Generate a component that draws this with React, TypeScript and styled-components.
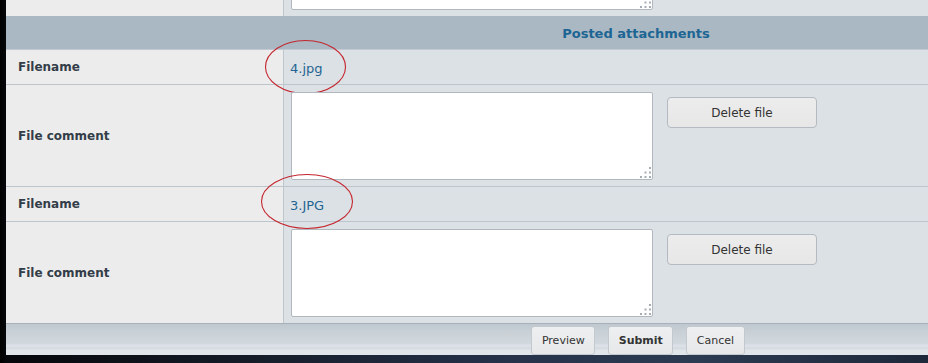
import * as React from "react";
import styled, { createGlobalStyle } from "styled-components";

const GlobalStyle = createGlobalStyle`
  * {
    box-sizing: border-box;
  }

  html,
  body {
    margin: 0;
    padding: 0;
    height: 363px;
    overflow: hidden;
  }

  body {
    background: linear-gradient(90deg, #000000 0, #05070a 6px, #141b26 25%, #25324a 55%, #2c3b52 75%, #1d283a 100%);
    font-family: "DejaVu Sans", Verdana, sans-serif;
  }
`;

// the form is wider than the window; its centre sits at x = 636
const CENTER_SHIFT = 338;

const Page = styled.div`
  margin-left: 6px;
  width: 922px;
`;

const Table = styled.table`
  margin-top: -85px;
  width: 100%;
  table-layout: fixed;
  border-collapse: separate;
  border-spacing: 0;
`;

const HeaderCell = styled.th`
  height: 34px;
  padding: 1px 0 0 ${CENTER_SHIFT}px;
  background-color: #a9b8c2;
  border-bottom: 1px solid #c3c9d4;
  color: #1d6594;
  font-size: 13px;
  font-weight: 700;
  text-align: center;
  vertical-align: middle;
`;

const Label = styled.th<{ $last?: boolean }>`
  width: 278px;
  padding: 0 0 0 12px;
  background-color: #ececec;
  border-right: 1px solid #bec6ce;
  border-bottom: ${({ $last }) => ($last ? "none" : "1px solid #bcc4cc")};
  color: #333d48;
  font-size: 12px;
  font-weight: 700;
  text-align: left;
  vertical-align: middle;
`;

const Value = styled.td<{ $last?: boolean }>`
  padding: 0 0 0 6px;
  background-color: #dce1e5;
  border-bottom: ${({ $last }) => ($last ? "none" : "1px solid #bcc4cc")};
  vertical-align: middle;
`;

const FilenameRow = styled.tr`
  height: 35px;
`;

const CommentCell = styled(Value)`
  padding: 7px 0 6px 7px;
  vertical-align: top;
`;

const CommentBox = styled.div`
  display: flex;
  align-items: flex-start;
  gap: 14px;
`;

const Grow = styled.span`
  position: relative;
  display: inline-block;
  line-height: 0;
`;

const Textarea = styled.textarea`
  display: block;
  width: 362px;
  height: 88px;
  margin: 0;
  padding: 3px;
  background: #ffffff;
  border: 1px solid #b0b7be;
  border-radius: 2px;
  resize: none;
  outline: none;
  font-family: "DejaVu Sans", Verdana, sans-serif;
  font-size: 12px;
`;

const Grip = styled.svg`
  position: absolute;
  right: 2px;
  bottom: 2px;
  width: 11px;
  height: 11px;
`;

const DeleteButton = styled.button`
  margin-top: 5px;
  width: 150px;
  height: 31px;
  padding: 0;
  background: linear-gradient(#ececec, #e7e7e7);
  border: 1px solid #b3bac1;
  border-radius: 4px;
  color: #333333;
  font-family: "DejaVu Sans", Verdana, sans-serif;
  font-size: 12px;
  cursor: pointer;
`;

const FileLink = styled.a`
  position: relative;
  color: #1f6593;
  font-size: 13px;
  text-decoration: none;
`;

const Ring = styled.svg`
  position: absolute;
  overflow: visible;
  pointer-events: none;
`;

const Bar = styled.div`
  display: flex;
  justify-content: center;
  gap: 13px;
  height: 32px;
  padding: 2px 0 0 ${CENTER_SHIFT + 4}px;
  border-top: 1px solid #a8b1b9;
  background: linear-gradient(
    #bfc8cf 0,
    #c9d1d7 8px,
    #d1d8de 20px,
    #dde3e8 21px,
    #d3dae0 25px,
    #e1e6ea 26px,
    #e1e6ea 100%
  );
`;

const BarButton = styled.button<{ $primary?: boolean }>`
  height: 29px;
  padding: 0 9.5px;
  background: linear-gradient(#eeeff0, #e6e8ea);
  border: 1px solid #c3c9ce;
  border-radius: 3px;
  color: #333333;
  font-family: "DejaVu Sans", Verdana, sans-serif;
  font-size: 11px;
  font-weight: ${({ $primary }) => ($primary ? 700 : 400)};
  cursor: pointer;
`;

const GripDots = () => (
  <Grip viewBox="0 0 11 11">
    <g fill="#a7adb4">
      <rect x="9" y="0" width="2" height="2" />
      <rect x="4.5" y="4.5" width="2" height="2" />
      <rect x="9" y="4.5" width="2" height="2" />
      <rect x="0" y="9" width="2" height="2" />
      <rect x="4.5" y="9" width="2" height="2" />
      <rect x="9" y="9" width="2" height="2" />
    </g>
  </Grip>
);

interface IRingProps {
  left: number;
  top: number;
  width: number;
  height: number;
}

const RedRing = ({ left, top, width, height }: IRingProps) => (
  <Ring style={{ left, top, width, height }} viewBox={`0 0 ${width} ${height}`}>
    <ellipse
      cx={width / 2}
      cy={height / 2}
      rx={width / 2 - 0.5}
      ry={height / 2 - 0.5}
      fill="none"
      stroke="#c4262e"
      strokeWidth="1.1"
    />
  </Ring>
);

interface IAttachment {
  name: string;
  ring: IRingProps;
}

const ATTACHMENTS: IAttachment[] = [
  { name: "4.jpg", ring: { left: -25, top: -21, width: 81, height: 54 } },
  { name: "3.JPG", ring: { left: -29, top: -24, width: 92, height: 55 } }
];

interface ICommentRowProps {
  last?: boolean;
  partial?: boolean;
}

// partial: the row cut by the top of the window, only its textarea shows
const CommentRow = ({ last, partial }: ICommentRowProps) => (
  <tr>
    <Label $last={last}>{partial ? null : "File comment"}</Label>
    <CommentCell $last={last}>
      <CommentBox>
        <Grow>
          <Textarea />
          <GripDots />
        </Grow>
        {!partial && <DeleteButton type="button">Delete file</DeleteButton>}
      </CommentBox>
    </CommentCell>
  </tr>
);

const App: React.FC = () => (
  <>
    <GlobalStyle />
    <Page>
      <Table>
        <tbody>
          <CommentRow last partial />
          <tr>
            <HeaderCell colSpan={2}>Posted attachments</HeaderCell>
          </tr>
          {ATTACHMENTS.map((file, i) => (
            <React.Fragment key={`${i}-${file.name}`}>
              <FilenameRow>
                <Label>Filename</Label>
                <Value>
                  <FileLink href="#">
                    {file.name}
                    <RedRing {...file.ring} />
                  </FileLink>
                </Value>
              </FilenameRow>
              <CommentRow last={i === ATTACHMENTS.length - 1} />
            </React.Fragment>
          ))}
        </tbody>
      </Table>
      <Bar>
        <BarButton type="button">Preview</BarButton>
        <BarButton type="button" $primary>Submit</BarButton>
        <BarButton type="button">Cancel</BarButton>
      </Bar>
    </Page>
  </>
);

export default App;
